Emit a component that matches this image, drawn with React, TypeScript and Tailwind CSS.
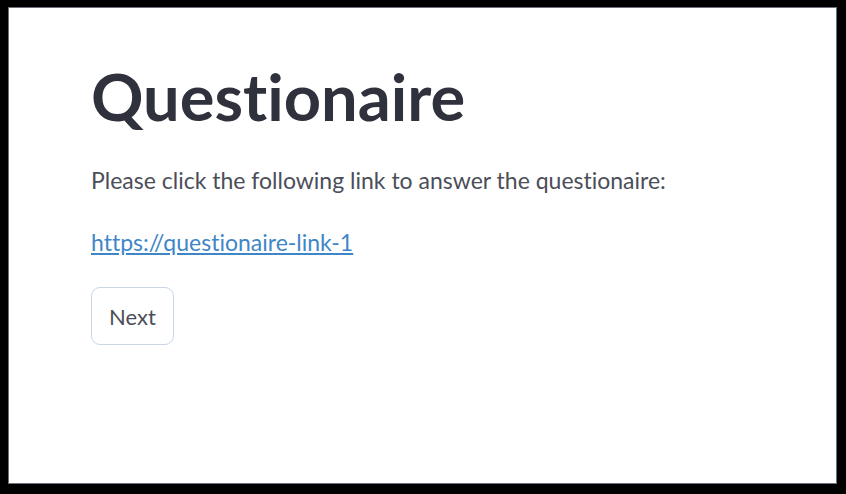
import React from 'react';

export default function App() {
  return (
    <main className="w-[846px] h-[494px] bg-black pt-[7px] pl-[8px]">
      <div
        className="w-[829px] h-[477px] bg-white border border-[#6e717a] pl-[82px] pt-[52px] [font-variant-ligatures:none]"
        style={{ fontFamily: 'Lato, "Noto Sans", sans-serif' }}
      >
        <h1 className="text-[65px] leading-[72px] font-bold text-[#2f313c]">
          Questionaire
        </h1>
        <p className="mt-[33px] text-[23px] leading-[30px] text-[#4b4e58]">
          Please click the following link to answer the questionaire:
        </p>
        <p className="mt-[32px] text-[23px] leading-[30px]">
          <a href="#" className="text-[#3f86c8] underline">https://questionaire-link-1</a>
        </p>
        <button className="mt-[30px] w-[83px] h-[58px] rounded-[9px] border border-[#c8d6e6] bg-white text-[22px] text-[#4b4e58]">
          Next
        </button>
      </div>
    </main>
  );
}
